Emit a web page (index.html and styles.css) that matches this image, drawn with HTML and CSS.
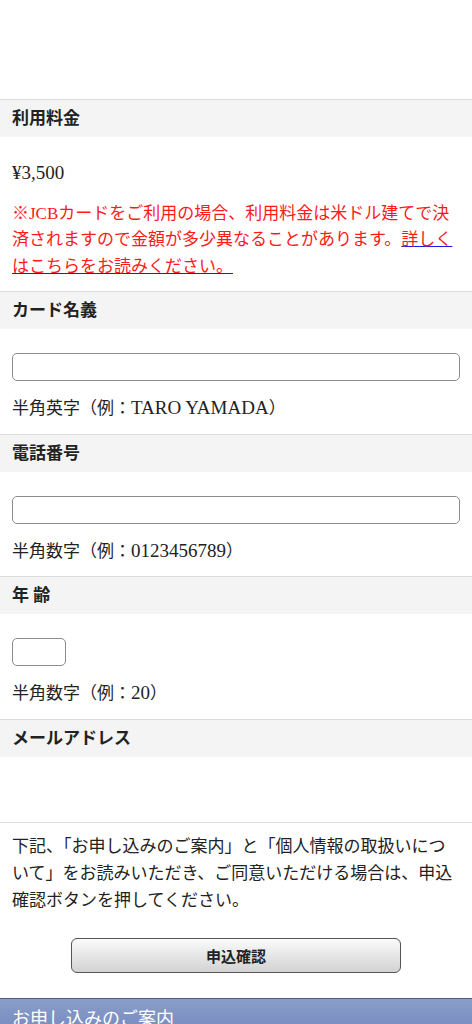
FILE: index.html
```html
<!DOCTYPE html>
<html lang="ja">
<head>
  <meta charset="UTF-8">
  <meta name="viewport" content="width=device-width, initial-scale=1.0">
  <title>お申し込みフォーム</title>
  <link rel="stylesheet" href="styles.css">
</head>
<body>

  <div class="top-space"></div>

  <form class="entry-form" onsubmit="return false">

    <div class="section">
      <h2 class="section-title">利用料金</h2>
      <div class="section-body">
        <p class="price"><span class="latin">¥3,500</span></p>
        <p class="note">※JCBカードをご利用の場合、利用料金は米ドル建てで決済されますので金額が多少異なることがあります。<a href="#" class="note-link"><span>詳しくはこちらをお読みください。</span></a></p>
      </div>
    </div>

    <div class="section">
      <h2 class="section-title">カード名義</h2>
      <div class="section-body">
        <input type="text" name="card_name" class="text-input">
        <p class="hint">半角英字（例：<span class="latin">TARO YAMADA</span>）</p>
      </div>
    </div>

    <div class="section">
      <h2 class="section-title">電話番号</h2>
      <div class="section-body">
        <input type="tel" name="tel" class="text-input">
        <p class="hint">半角数字（例：<span class="latin">0123456789</span>）</p>
      </div>
    </div>

    <div class="section">
      <h2 class="section-title">年 齢</h2>
      <div class="section-body">
        <input type="text" name="age" class="text-input text-input-short">
        <p class="hint">半角数字（例：<span class="latin">20</span>）</p>
      </div>
    </div>

    <div class="section">
      <h2 class="section-title">メールアドレス</h2>
      <div class="section-body">
        <div class="empty-row"></div>
      </div>
    </div>

    <div class="section agree">
      <p class="agree-text">下記、「お申し込みのご案内」と「個人情報の取扱いについて」をお読みいただき、ご同意いただける場合は、申込確認ボタンを押してください。</p>
      <button type="submit" class="confirm-button">申込確認</button>
    </div>

  </form>

  <div class="guide">
    <h2 class="guide-title">お申し込みのご案内</h2>
  </div>

</body>
</html>
```

FILE: styles.css
```css
body {
  margin: 0;
  font-family: "Liberation Serif", "Noto Sans CJK JP", serif;
  font-size: 17px;
  color: #222;
  background-color: #fff;
}
p { margin: 0; }
.top-space { height: 99px; }
.latin { font-size: 19px; line-height: 0; }

.section { border-top: 1px solid #dcdcdc; }
.section-title {
  margin: 0;
  height: 37px;
  line-height: 37px;
  padding: 0 12px;
  background-color: #f4f4f4;
  font-size: 17px;
  font-weight: bold;
}
.section-body { padding: 24px 12px 11px; }

.price { line-height: 26.5px; }
.note { margin-top: 13px; line-height: 26.5px; color: #ff1a1a; }
.note-link { color: #1a1aee; text-decoration: underline; }
.note-link span { color: #ff1a1a; }

.text-input {
  display: block;
  width: 100%;
  height: 28px;
  margin: 0;
  padding: 0 6px;
  box-sizing: border-box;
  border: 1px solid #8c8c8c;
  border-radius: 5px;
  background-color: #fff;
  font-size: 16px;
}
.text-input-short { width: 54px; }
.hint { margin-top: 15px; line-height: 26.5px; }
.empty-row { height: 30px; }

.agree { padding: 10px 12px 25px; }
.agree-text { line-height: 27px; }
.confirm-button {
  display: block;
  width: 330px;
  height: 35px;
  margin: 24px auto 0;
  border: 1px solid #555;
  border-radius: 6px;
  background: linear-gradient(#fbfbfb, #e6e6e6 50%, #d3d3d3);
  font-family: "Noto Sans CJK JP", sans-serif;
  font-size: 15px;
  font-weight: bold;
  color: #222;
}

.guide {
  border-top: 1px solid #4d5d85;
  background: linear-gradient(#8a9dcb, #7188bb 40px);
  height: 60px;
}
.guide-title {
  margin: 0;
  padding: 8px 12px;
  font-size: 18px;
  font-weight: normal;
  color: #fff;
  line-height: 24px;
}
```
